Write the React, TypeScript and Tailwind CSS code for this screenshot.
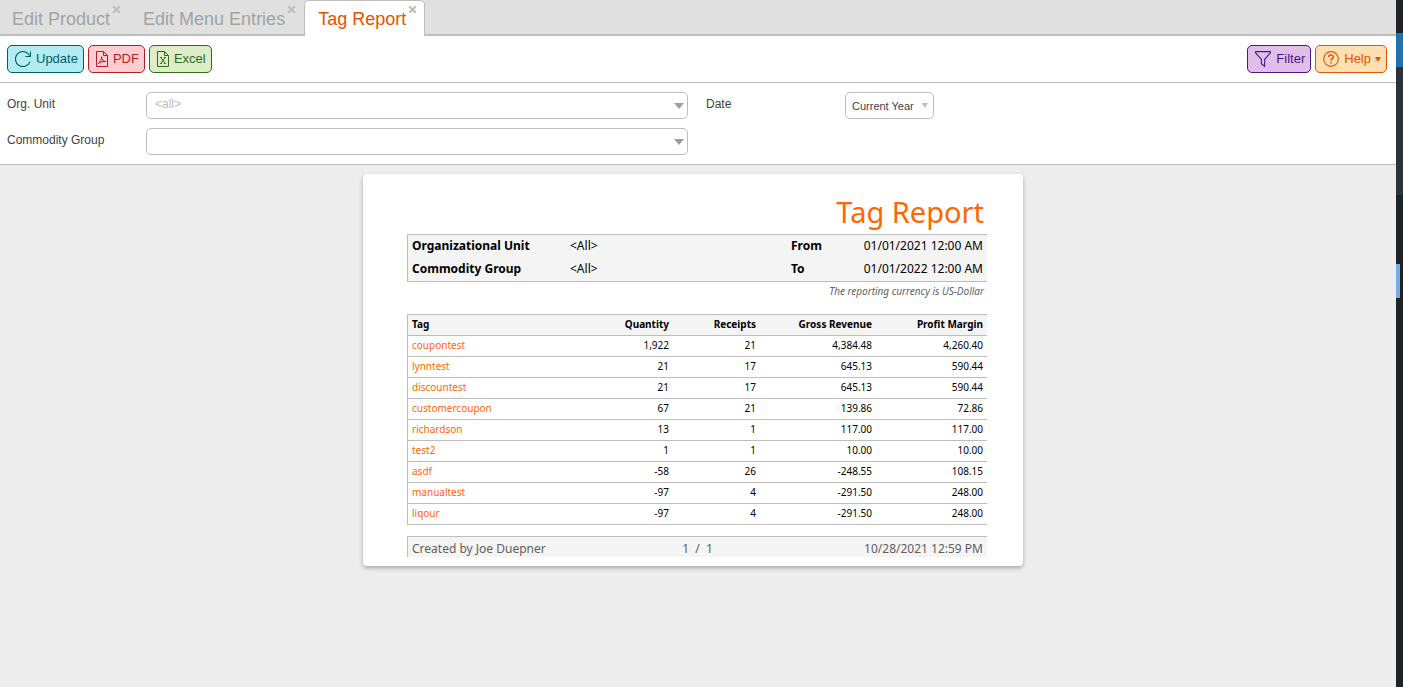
import React from 'react';

interface Tab {
  title: string;
  active?: boolean;
}

const tabs: Tab[] = [
  { title: 'Edit Product' },
  { title: 'Edit Menu Entries' },
  { title: 'Tag Report', active: true },
];

const rows = [
  { tag: 'coupontest', quantity: '1,922', receipts: '21', revenue: '4,384.48', margin: '4,260.40' },
  { tag: 'lynntest', quantity: '21', receipts: '17', revenue: '645.13', margin: '590.44' },
  { tag: 'discountest', quantity: '21', receipts: '17', revenue: '645.13', margin: '590.44' },
  { tag: 'customercoupon', quantity: '67', receipts: '21', revenue: '139.86', margin: '72.86' },
  { tag: 'richardson', quantity: '13', receipts: '1', revenue: '117.00', margin: '117.00' },
  { tag: 'test2', quantity: '1', receipts: '1', revenue: '10.00', margin: '10.00' },
  { tag: 'asdf', quantity: '-58', receipts: '26', revenue: '-248.55', margin: '108.15' },
  { tag: 'manualtest', quantity: '-97', receipts: '4', revenue: '-291.50', margin: '248.00' },
  { tag: 'liqour', quantity: '-97', receipts: '4', revenue: '-291.50', margin: '248.00' },
];

const RefreshIcon = () => (
  <svg className="w-4 h-4" viewBox="0 0 16 16" fill="none" stroke="currentColor" strokeWidth="1.1">
    <path d="M15 10.6A7.5 7.5 0 1 1 14.6 4.6" />
    <path d="M15.5 .4V5.5H10.4" />
  </svg>
);

const PdfIcon = () => (
  <svg className="w-3 h-4" viewBox="0 0 12 16" fill="none" stroke="currentColor">
    <path d="M.5.5H7.5L11.5 4.5V15.5H.5Z" />
    <path d="M7.5.5V4.5H11.5" />
    <path d="M2.3 12.6C4.2 11.2 5.7 8.2 5.6 5.7C5.5 8.4 7.3 10.4 9.9 10.6C7.2 10.2 4.3 10.8 2.3 12.6Z" strokeLinejoin="round" />
  </svg>
);

const ExcelIcon = () => (
  <svg className="w-3 h-4" viewBox="0 0 12 16" fill="none" stroke="currentColor">
    <path d="M.5.5H7.5L11.5 4.5V15.5H.5Z" />
    <path d="M7.5.5V4.5H11.5" />
    <path d="M4 6.5L8 12.5M8 6.5L4 12.5M3.2 6.5H5M7 6.5H8.8M3.2 12.5H5M7 12.5H8.8" />
  </svg>
);

const FilterIcon = () => (
  <svg className="w-4 h-4" viewBox="0 0 16 16" fill="none" stroke="currentColor" strokeWidth="1.1" strokeLinejoin="round">
    <path d="M.6.6H15.4V1.8L9.6 8.4V15.4L6.4 12.8V8.4L.6 1.8Z" />
  </svg>
);

const HelpIcon = () => (
  <svg className="w-4 h-4" viewBox="0 0 16 16" fill="none" stroke="currentColor" strokeWidth="1.1">
    <circle cx="8" cy="8" r="7.4" />
    <path d="M5.7 6.2C5.7 3.3 10.3 3.4 10.3 6C10.3 7.7 8 7.7 8 9.7" strokeWidth="1.5" />
    <path d="M8 10.9V12.5" strokeWidth="1.6" />
  </svg>
);

const Caret: React.FC<{ className: string }> = ({ className }) => (
  <svg className={className} viewBox="0 0 10 6" preserveAspectRatio="none" fill="currentColor">
    <path d="M0 0H10L5 6Z" />
  </svg>
);

const buttonClass = 'h-7 pl-[7px] pr-[5px] flex items-center gap-[5px] border rounded-[5px] text-[13px]';
const selectClass = 'h-[27px] appearance-none rounded-[5px] border border-[#bdbdbd] bg-white outline-none';
const numberClass = 'pr-1 pb-px text-right';

const App: React.FC = () => {
  return (
    <div className="flex min-h-screen bg-[#1d2327] font-['Liberation_Sans',Arial,sans-serif]">
      <div className="flex min-w-0 flex-1 flex-col bg-[#ededed]">
        {/* Tabs */}
        <nav className="flex h-9 bg-[#e0e0e0] shadow-[inset_0_-2px_0_#bdbdbd]">
          <div className="-ml-0.5 flex">
            {tabs.map((tab) => (
              <div
                key={tab.title}
                className={`flex items-start gap-0.5 rounded-t-[5px] border border-b-0 pl-[13px] pr-[7px] ${
                  tab.active ? 'border-[#bdbdbd] bg-white text-[#e65100]' : 'border-transparent text-[#a3a3a3]'
                }`}
              >
                <a href="#" className="pt-1 text-[18px] leading-7">{tab.title}</a>
                <button type="button" aria-label={`Close ${tab.title}`} className="pt-1 text-[#bdbdbd]">
                  <svg className="h-[9px] w-[9px]" viewBox="0 0 9 9" stroke="currentColor" strokeWidth="2.2">
                    <path d="M1.2 1.2L7.8 7.8M7.8 1.2L1.2 7.8" />
                  </svg>
                </button>
              </div>
            ))}
          </div>
        </nav>

        {/* Toolbar */}
        <div className="flex items-center justify-between border-b border-[#bdbdbd] bg-white py-[9px] pl-[7px] pr-[9px]">
          <div className="flex gap-1">
            <button type="button" className={`${buttonClass} border-[#006064] bg-[#b2ebf2] text-[#006064]`}>
              <RefreshIcon /> Update
            </button>
            <button type="button" className={`${buttonClass} border-[#b71c1c] bg-[#ffcdd2] text-[#b71c1c]`}>
              <PdfIcon /> PDF
            </button>
            <button type="button" className={`${buttonClass} border-[#33691e] bg-[#dcedc8] text-[#33691e]`}>
              <ExcelIcon /> Excel
            </button>
          </div>
          <div className="flex gap-1">
            <button type="button" className={`${buttonClass} border-[#4a148c] bg-[#e1bee7] text-[#4a148c]`}>
              <FilterIcon /> Filter
            </button>
            <button type="button" className={`${buttonClass} border-[#e65100] bg-[#ffe0b2] text-[#e65100]`}>
              <HelpIcon />
              <span className="flex items-center gap-1">
                Help <Caret className="h-[5px] w-[6px]" />
              </span>
            </button>
          </div>
        </div>

        {/* Filter form */}
        <form className="grid grid-cols-[139px_542px_139px_1fr] gap-y-[9px] border-b border-[#bdbdbd] bg-white px-[7px] py-[9px] text-[12px] text-[#424242]">
          <label htmlFor="org-unit" className="leading-6">Org. Unit</label>
          <div className="relative">
            <select id="org-unit" className={`${selectClass} w-full px-2 pb-[3px] text-[#bdbdbd]`}>
              <option>&lt;all&gt;</option>
            </select>
            <Caret className="pointer-events-none absolute right-1 top-[11px] h-[6px] w-[10px] text-[#9e9e9e]" />
          </div>
          <label htmlFor="date" className="pl-[18px] leading-6">Date</label>
          <div className="flex pl-[18px]">
            <div className="relative">
              <select id="date" className={`${selectClass} w-[89px] pl-[6px] pt-px text-[11px]`}>
                <option>Current Year</option>
              </select>
              <Caret className="pointer-events-none absolute right-[6px] top-[11px] h-[5px] w-[6px] text-[#bdbdbd]" />
            </div>
          </div>
          <label htmlFor="commodity-group" className="leading-6">Commodity Group</label>
          <div className="relative">
            <select id="commodity-group" className={`${selectClass} w-full px-2`}>
              <option></option>
            </select>
            <Caret className="pointer-events-none absolute right-1 top-[11px] h-[6px] w-[10px] text-[#9e9e9e]" />
          </div>
        </form>

        {/* Report */}
        <main className="px-4 py-[9px] pr-[26px]">
          <article className="mx-auto w-full max-w-[660px] rounded-[4px] bg-white pb-[9px] pl-11 pr-9 pt-[17px] font-['Noto_Sans',sans-serif] text-black shadow-[0_2px_4px_rgba(0,0,0,0.3)]">
            <h1 className="pb-0.5 pr-[3px] text-right text-[29px] leading-[41px] text-[#ff6600]">Tag Report</h1>

            <dl className="grid grid-cols-[158px_1fr_56px_136px] gap-y-0.5 border-y border-l border-[#bdbdbd] bg-[#f4f4f4] px-1 pb-0.5 text-[12px] leading-[21px]">
              <dt className="font-bold">Organizational Unit</dt>
              <dd>&lt;All&gt;</dd>
              <dt className="font-bold">From</dt>
              <dd className="text-right">01/01/2021 12:00 AM</dd>
              <dt className="font-bold">Commodity Group</dt>
              <dd>&lt;All&gt;</dd>
              <dt className="font-bold">To</dt>
              <dd className="text-right">01/01/2022 12:00 AM</dd>
            </dl>

            <p className="pb-[14px] pr-[3px] text-right text-[10px] italic leading-[18px] text-[#616161]">
              The reporting currency is US-Dollar
            </p>

            <table className="w-full table-fixed border-collapse text-[10px]">
              <colgroup>
                <col />
                <col className="w-[87px]" />
                <col className="w-[87px]" />
                <col className="w-[116px]" />
                <col className="w-[111px]" />
              </colgroup>
              <thead>
                <tr className="h-[21px] border-y border-l border-[#bdbdbd] bg-[#f4f4f4]">
                  <th className="pb-px pl-1 text-left">Tag</th>
                  <th className={numberClass}>Quantity</th>
                  <th className={numberClass}>Receipts</th>
                  <th className={numberClass}>Gross Revenue</th>
                  <th className={numberClass}>Profit Margin</th>
                </tr>
              </thead>
              <tbody>
                {rows.map((row) => (
                  <tr key={row.tag} className="h-[21px] border-b border-l border-[#bdbdbd]">
                    <td className="pb-px pl-1"><a href="#" className="text-[#ff6600]">{row.tag}</a></td>
                    <td className={numberClass}>{row.quantity}</td>
                    <td className={numberClass}>{row.receipts}</td>
                    <td className={numberClass}>{row.revenue}</td>
                    <td className={numberClass}>{row.margin}</td>
                  </tr>
                ))}
              </tbody>
            </table>

            <footer className="mt-[11px] grid grid-cols-3 border-l border-t border-[#bdbdbd] bg-[#f4f4f4] px-1 pt-1 text-[12px] leading-4 text-[#616161]">
              <span>Created by Joe Duepner</span>
              <span className="text-center">1&nbsp; / &nbsp;1</span>
              <span className="text-right">10/28/2021 12:59 PM</span>
            </footer>
          </article>
        </main>
      </div>

      {/* Edge of the admin menu */}
      <aside className="w-[7px] shrink-0">
        <div className="mt-[33px] h-[34px] bg-[#2271b1]"></div>
        <div className="h-32 bg-[#2c3338]"></div>
        <div className="mt-[69px] h-[34px] w-1 bg-[#72aee6]"></div>
      </aside>
    </div>
  );
};

export default App;
